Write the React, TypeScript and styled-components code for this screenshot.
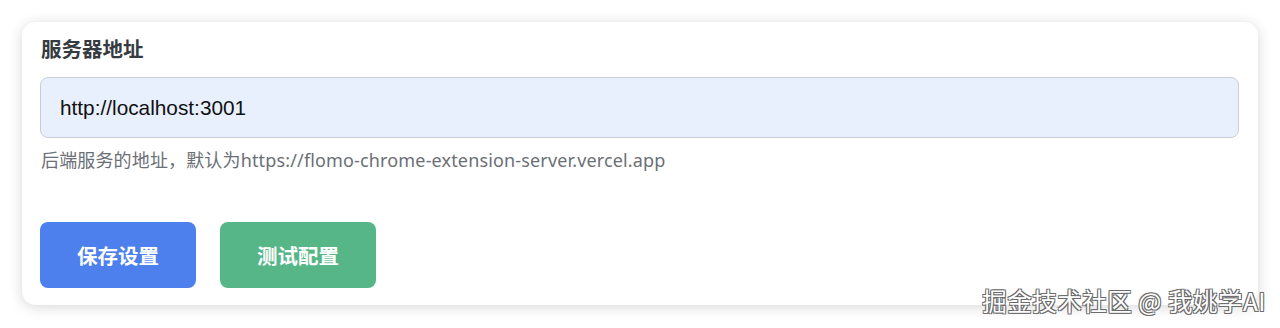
import React from "react";
import styled, { createGlobalStyle } from "styled-components";

const Global = createGlobalStyle`
  html, body { margin: 0; padding: 0; background: #ffffff; }
  body { font-family: "Liberation Sans", "Noto Sans CJK SC", sans-serif; }
`;

const Page = styled.div`
  position: relative;
  width: 1280px;
  height: 328px;
  padding: 22px 22px 0 22px;
  box-sizing: border-box;
  overflow: hidden;
`;

const Card = styled.div`
  width: 1236px;
  height: 283px;
  box-sizing: border-box;
  background: #ffffff;
  border-radius: 14px;
  box-shadow: 0 2px 14px rgba(0, 0, 0, 0.16);
  padding: 11px 18px 0 18px;
  display: flex;
  flex-direction: column;
`;

const Label = styled.div`
  font-family: "Noto Sans CJK SC", sans-serif;
  font-size: 20.5px;
  font-weight: 700;
  color: #363b42;
  line-height: 30px;
  padding-left: 1px;
`;

const Input = styled.input`
  margin-top: 14px;
  height: 61px;
  width: 1199px;
  box-sizing: border-box;
  border: 1px solid #c9ced6;
  border-radius: 8px;
  background: #e8f0fe;
  padding: 0 19px;
  font-family: "Liberation Sans", sans-serif;
  font-size: 20.8px;
  color: #111;
  outline: none;
`;

const Help = styled.div`
  margin-top: 10px;
  font-family: "Noto Sans", "Noto Sans CJK SC", sans-serif;
  font-size: 18px;
  letter-spacing: 0.15px;
  color: #6b6f76;
  line-height: 24px;
  padding-left: 1px;
`;

const Actions = styled.div`
  display: flex;
  gap: 24px;
  margin-top: 50px;
`;

const Button = styled.button<{ $tone: "blue" | "green" }>`
  width: 156px;
  height: 66px;
  border: none;
  border-radius: 8px;
  background: ${(p) => (p.$tone === "blue" ? "#4d80ec" : "#56b688")};
  color: #fff;
  font-family: "Noto Sans CJK SC", sans-serif;
  font-size: 20.5px;
  font-weight: 700;
  cursor: pointer;
`;

const Watermark = styled.div`
  position: absolute;
  right: 14px;
  bottom: 12px;
  font-family: "Noto Sans CJK SC", sans-serif;
  font-size: 24.5px;
  line-height: 30px;
  color: #ffffff;
  letter-spacing: 0.5px;
  text-shadow: -1px -1px 0 #6a6a6a, 1px -1px 0 #6a6a6a, -1px 1px 0 #6a6a6a,
    1px 1px 0 #6a6a6a;
`;

export default function App() {
  return (
    <>
      <Global />
      <Page>
        <Card>
          <Label>服务器地址</Label>
          <Input defaultValue="http://localhost:3001" />
          <Help>后端服务的地址，默认为https://flomo-chrome-extension-server.vercel.app</Help>
          <Actions>
            <Button $tone="blue">保存设置</Button>
            <Button $tone="green">测试配置</Button>
          </Actions>
        </Card>
        <Watermark>掘金技术社区 @ 我姚学AI</Watermark>
      </Page>
    </>
  );
}
